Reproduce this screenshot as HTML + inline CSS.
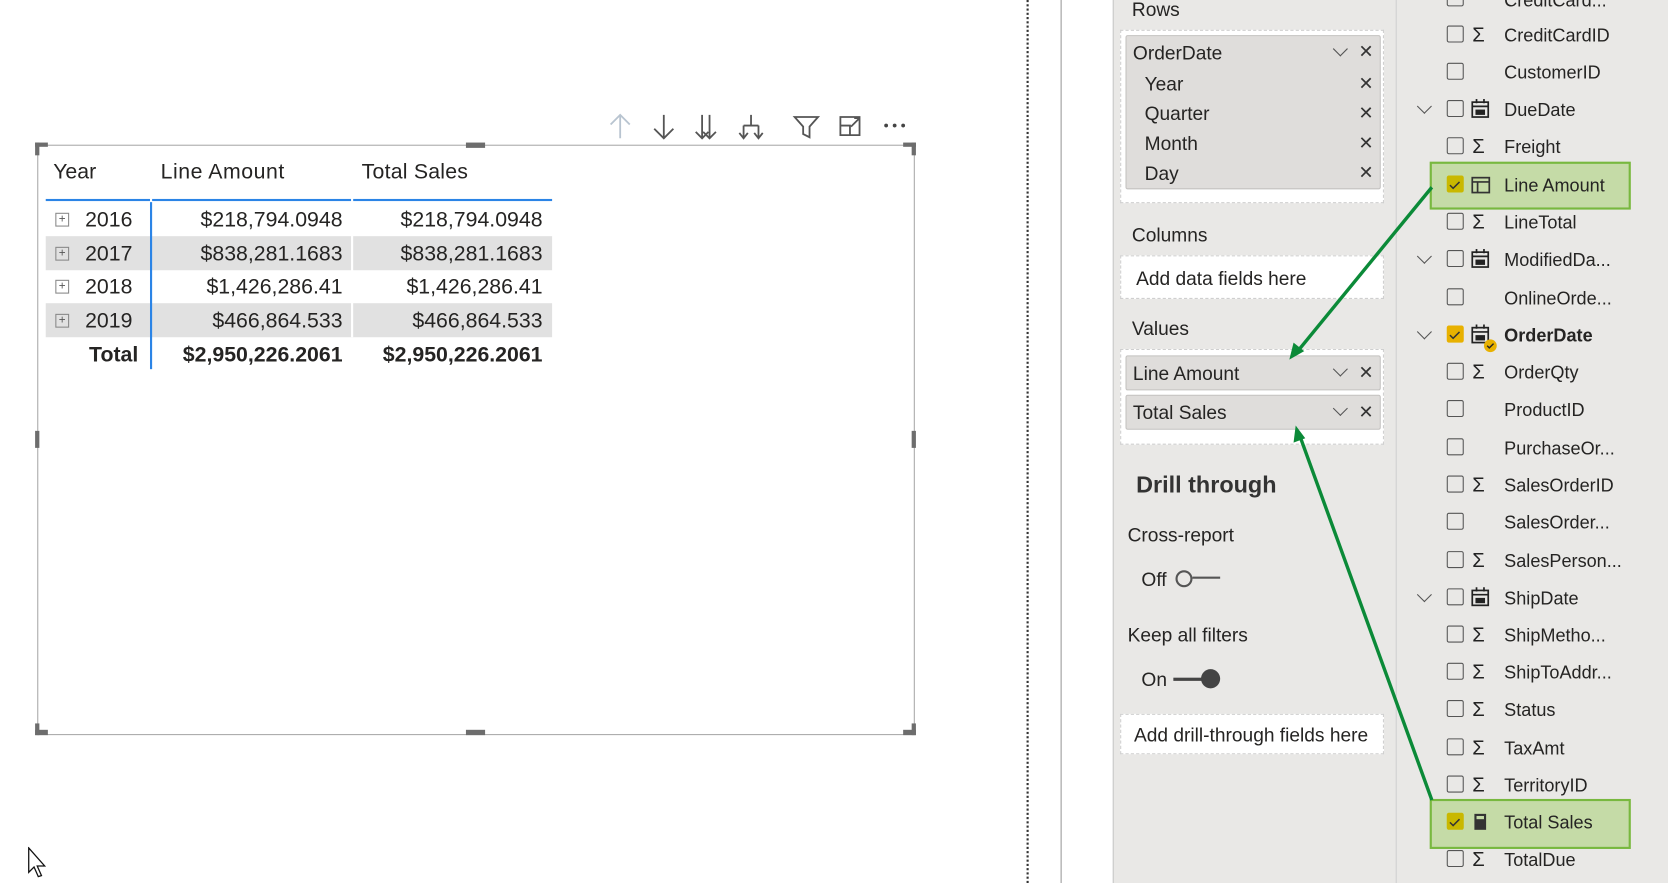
<!DOCTYPE html>
<html><head><meta charset="utf-8">
<style>
html,body{margin:0;padding:0;width:1668px;height:883px;overflow:hidden;background:#fff;}
#w{position:absolute;left:0;top:0;width:1568px;height:830px;transform-origin:0 0;transform:scale(1.06378,1.06386);font-family:"Liberation Sans",sans-serif;color:#252423;}
.a{position:absolute;white-space:nowrap;}
.t{font-size:20px;margin-top:2px;}
.num{position:absolute;text-align:right;font-size:20px;margin-top:2px;}
.p{font-size:18px;color:#252423;margin-top:1px;}
.cb{position:absolute;width:14px;height:14px;border:1.6px solid #555;border-radius:2px;background:transparent;}
.sg{position:absolute;font-size:19px;color:#222;margin-top:1px;}
.fl{position:absolute;font-size:17px;margin-top:1px;}
.chev{position:absolute;width:9px;height:9px;border-right:1.4px solid #555;border-bottom:1.4px solid #555;transform:rotate(45deg);}
.x{position:absolute;font-size:17px;color:#333;margin-top:1px;}
.h{position:absolute;background:#6d6d6d;}
</style></head><body><div id="w">
<div class="a" style="left:965px;top:0;width:0;height:830px;border-left:2.5px dotted #333;"></div>
<div class="a" style="left:997px;top:0;width:1px;height:830px;background:#9a9a9a;"></div>
<div class="a" style="left:1046px;top:0;width:266px;height:830px;background:#e9e8e6;border-left:1px solid #c8c8c8;"></div>
<div class="a" style="left:1312px;top:0;width:256px;height:830px;background:#e9e8e6;border-left:1px solid #d0d0d0;"></div>

<div class="a" style="left:35px;top:136px;width:823px;height:553px;border:1px solid #a9a9a9;"></div>
<div class="h" style="left:33px;top:134px;width:12px;height:4px"></div><div class="h" style="left:33px;top:134px;width:4px;height:12px"></div>
<div class="h" style="left:849px;top:134px;width:12px;height:4px"></div><div class="h" style="left:857px;top:134px;width:4px;height:12px"></div>
<div class="h" style="left:33px;top:686px;width:12px;height:5px"></div><div class="h" style="left:33px;top:680px;width:4px;height:11px"></div>
<div class="h" style="left:849px;top:686px;width:12px;height:5px"></div><div class="h" style="left:857px;top:680px;width:4px;height:11px"></div>
<div class="h" style="left:438px;top:134px;width:18px;height:5px"></div>
<div class="h" style="left:438px;top:686px;width:18px;height:5px"></div>
<div class="h" style="left:33px;top:405px;width:4px;height:16px"></div>
<div class="h" style="left:857px;top:405px;width:4px;height:16px"></div>

<svg class="a" style="left:565px;top:104px" width="290" height="30" viewBox="0 0 290 30" fill="none" stroke-width="1.7">
<g stroke="#b8c4d0"><path d="M18 4v22M9 13l9-9 9 9"/></g>
<g stroke="#555"><path d="M59 4v22M50 17l9 9 9-9"/>
<path d="M95 4v22M102 4v22M89 20l6 6 6-6M96 20l6 6 6-6"/>
<path d="M141 4v10M134 14h14M134 14v12M148 14v12M130 21l4 5 4-5M144 21l4 5 4-5"/>
<path d="M182 6h22l-8 9v10l-6-3v-7z"/>
<path d="M225 14h9v9h-9zM225 14v-8h18v17h-9M235 15l8-8M238 7h5v5"/></g>
<g fill="#444" stroke="none"><circle cx="268" cy="14" r="1.8"/><circle cx="276" cy="14" r="1.8"/><circle cx="284" cy="14" r="1.8"/></g>
</svg>

<div class="a t" style="left:50px;top:149px">Year</div>
<div class="a t" style="left:151px;top:149px;letter-spacing:0.5px">Line Amount</div>
<div class="a t" style="left:340px;top:149px;letter-spacing:0.2px">Total Sales</div>
<div class="a" style="left:43px;top:187px;width:98px;height:2px;background:#2b84e6"></div>
<div class="a" style="left:143px;top:187px;width:187px;height:2px;background:#2b84e6"></div>
<div class="a" style="left:332px;top:187px;width:187px;height:2px;background:#2b84e6"></div>
<div class="a" style="left:43px;top:222px;width:476px;height:32px;background:#e1e1e1"></div>
<div class="a" style="left:43px;top:285px;width:476px;height:32px;background:#e1e1e1"></div>
<div class="a" style="left:330px;top:190px;width:2px;height:127px;background:#fff"></div>
<div class="a" style="left:141px;top:190px;width:2px;height:157px;background:#2b84e6"></div>

<div class="a" style="left:52px;top:200px;width:11px;height:11px;border:1px solid #888;font-size:11px;line-height:11px;text-align:center;color:#555">+</div>
<div class="a" style="left:52px;top:232px;width:11px;height:11px;border:1px solid #888;font-size:11px;line-height:11px;text-align:center;color:#555">+</div>
<div class="a" style="left:52px;top:263px;width:11px;height:11px;border:1px solid #888;font-size:11px;line-height:11px;text-align:center;color:#555">+</div>
<div class="a" style="left:52px;top:295px;width:11px;height:11px;border:1px solid #888;font-size:11px;line-height:11px;text-align:center;color:#555">+</div>
<div class="a t" style="left:80px;top:194px">2016</div>
<div class="a t" style="left:80px;top:226px">2017</div>
<div class="a t" style="left:80px;top:257px">2018</div>
<div class="a t" style="left:80px;top:289px">2019</div>
<div class="num" style="left:150px;width:172px;top:194px">$218,794.0948</div>
<div class="num" style="left:150px;width:172px;top:226px">$838,281.1683</div>
<div class="num" style="left:150px;width:172px;top:257px">$1,426,286.41</div>
<div class="num" style="left:150px;width:172px;top:289px">$466,864.533</div>
<div class="num" style="left:340px;width:170px;top:194px">$218,794.0948</div>
<div class="num" style="left:340px;width:170px;top:226px">$838,281.1683</div>
<div class="num" style="left:340px;width:170px;top:257px">$1,426,286.41</div>
<div class="num" style="left:340px;width:170px;top:289px">$466,864.533</div>
<div class="num" style="left:50px;width:80px;top:321px;font-weight:bold">Total</div>
<div class="num" style="left:140px;width:182px;top:321px;font-weight:bold">$2,950,226.2061</div>
<div class="num" style="left:330px;width:180px;top:321px;font-weight:bold">$2,950,226.2061</div>

<svg class="a" style="left:26px;top:796px" width="20" height="30" viewBox="0 0 20 30"><path d="M1 1v23l5-5 4 9 3-1-4-9h7z" fill="#fff" stroke="#111" stroke-width="1.2"/></svg>

<div class="a p" style="left:1064px;top:-2px">Rows</div>
<div class="a" style="left:1053px;top:28px;width:246px;height:161px;border:1.5px dashed #cfcfcf;background:#fff"></div>
<div class="a" style="left:1058px;top:33px;width:238px;height:143px;background:#dfdddb;border:1px solid #c4c2c0;border-radius:2px"></div>
<div class="a p" style="left:1065px;top:39px">OrderDate</div>
<div class="chev" style="left:1255px;top:41px"></div><div class="x" style="left:1277px;top:38px">✕</div>
<div class="a p" style="left:1076px;top:68px">Year</div><div class="x" style="left:1277px;top:68px">✕</div>
<div class="a p" style="left:1076px;top:96px">Quarter</div><div class="x" style="left:1277px;top:96px">✕</div>
<div class="a p" style="left:1076px;top:124px">Month</div><div class="x" style="left:1277px;top:124px">✕</div>
<div class="a p" style="left:1076px;top:152px">Day</div><div class="x" style="left:1277px;top:152px">✕</div>

<div class="a p" style="left:1064px;top:210px">Columns</div>
<div class="a" style="left:1053px;top:240px;width:246px;height:39px;border:1.5px dashed #cfcfcf;background:#fff"></div>
<div class="a p" style="left:1068px;top:251px">Add data fields here</div>

<div class="a p" style="left:1064px;top:298px">Values</div>
<div class="a" style="left:1053px;top:328px;width:246px;height:88px;border:1.5px dashed #cfcfcf;background:#fff"></div>
<div class="a" style="left:1058px;top:334px;width:238px;height:31px;background:#dfdddb;border:1px solid #c4c2c0;border-radius:2px"></div>
<div class="a" style="left:1058px;top:371px;width:238px;height:31px;background:#dfdddb;border:1px solid #c4c2c0;border-radius:2px"></div>
<div class="a p" style="left:1065px;top:340px">Line Amount</div><div class="chev" style="left:1255px;top:342px"></div><div class="x" style="left:1277px;top:340px">✕</div>
<div class="a p" style="left:1065px;top:377px">Total Sales</div><div class="chev" style="left:1255px;top:379px"></div><div class="x" style="left:1277px;top:377px">✕</div>

<div class="a" style="left:1068px;top:443px;font-size:22px;font-weight:bold;color:#333">Drill through</div>
<div class="a p" style="left:1060px;top:492px">Cross-report</div>
<div class="a p" style="left:1073px;top:534px">Off</div>
<div class="a" style="left:1105px;top:536px;width:12px;height:12px;border:2px solid #555;border-radius:50%"></div>
<div class="a" style="left:1121px;top:542px;width:26px;height:2px;background:#555"></div>
<div class="a p" style="left:1060px;top:586px">Keep all filters</div>
<div class="a p" style="left:1073px;top:628px">On</div>
<div class="a" style="left:1103px;top:637px;width:28px;height:2.5px;background:#444"></div>
<div class="a" style="left:1129px;top:629px;width:18px;height:18px;background:#444;border-radius:50%"></div>
<div class="a" style="left:1053px;top:671px;width:246px;height:36px;border:1.5px dashed #cfcfcf;background:#fff"></div>
<div class="a p" style="left:1066px;top:680px">Add drill-through fields here</div>

<div class="a" style="left:1344px;top:152px;width:185px;height:41px;background:#c5dba7;border:2px solid #78b83f"></div>
<div class="a" style="left:1344px;top:751px;width:185px;height:43px;background:#c5dba7;border:2px solid #78b83f"></div>

<div class="cb" style="left:1360px;top:-10px"></div><div class="fl" style="left:1414px;top:-10px">CreditCard...</div>
<div class="cb" style="left:1360px;top:24px"></div><div class="sg" style="left:1384px;top:22px">Σ</div><div class="fl" style="left:1414px;top:23px">CreditCardID</div>
<div class="cb" style="left:1360px;top:59px"></div><div class="fl" style="left:1414px;top:58px">CustomerID</div>
<div class="chev" style="left:1334px;top:95px"></div><div class="cb" style="left:1360px;top:94px"></div><div class="fl" style="left:1414px;top:93px">DueDate</div>
<div class="cb" style="left:1360px;top:129px"></div><div class="sg" style="left:1384px;top:127px">Σ</div><div class="fl" style="left:1414px;top:128px">Freight</div>
<div class="cb" style="left:1360px;top:165px;background:#c9b800;border-color:#c9b800"></div><div class="fl" style="left:1414px;top:164px">Line Amount</div>
<div class="cb" style="left:1360px;top:200px"></div><div class="sg" style="left:1384px;top:198px">Σ</div><div class="fl" style="left:1414px;top:199px">LineTotal</div>
<div class="chev" style="left:1334px;top:236px"></div><div class="cb" style="left:1360px;top:235px"></div><div class="fl" style="left:1414px;top:234px">ModifiedDa...</div>
<div class="cb" style="left:1360px;top:271px"></div><div class="fl" style="left:1414px;top:270px">OnlineOrde...</div>
<div class="chev" style="left:1334px;top:307px"></div><div class="cb" style="left:1360px;top:306px;background:#e8b100;border-color:#e8b100"></div><div class="fl" style="left:1414px;top:305px;font-weight:bold">OrderDate</div>
<div class="cb" style="left:1360px;top:341px"></div><div class="sg" style="left:1384px;top:339px">Σ</div><div class="fl" style="left:1414px;top:340px">OrderQty</div>
<div class="cb" style="left:1360px;top:376px"></div><div class="fl" style="left:1414px;top:375px">ProductID</div>
<div class="cb" style="left:1360px;top:412px"></div><div class="fl" style="left:1414px;top:411px">PurchaseOr...</div>
<div class="cb" style="left:1360px;top:447px"></div><div class="sg" style="left:1384px;top:445px">Σ</div><div class="fl" style="left:1414px;top:446px">SalesOrderID</div>
<div class="cb" style="left:1360px;top:482px"></div><div class="fl" style="left:1414px;top:481px">SalesOrder...</div>
<div class="cb" style="left:1360px;top:518px"></div><div class="sg" style="left:1384px;top:516px">Σ</div><div class="fl" style="left:1414px;top:517px">SalesPerson...</div>
<div class="chev" style="left:1334px;top:554px"></div><div class="cb" style="left:1360px;top:553px"></div><div class="fl" style="left:1414px;top:552px">ShipDate</div>
<div class="cb" style="left:1360px;top:588px"></div><div class="sg" style="left:1384px;top:586px">Σ</div><div class="fl" style="left:1414px;top:587px">ShipMetho...</div>
<div class="cb" style="left:1360px;top:623px"></div><div class="sg" style="left:1384px;top:621px">Σ</div><div class="fl" style="left:1414px;top:622px">ShipToAddr...</div>
<div class="cb" style="left:1360px;top:658px"></div><div class="sg" style="left:1384px;top:656px">Σ</div><div class="fl" style="left:1414px;top:657px">Status</div>
<div class="cb" style="left:1360px;top:694px"></div><div class="sg" style="left:1384px;top:692px">Σ</div><div class="fl" style="left:1414px;top:693px">TaxAmt</div>
<div class="cb" style="left:1360px;top:729px"></div><div class="sg" style="left:1384px;top:727px">Σ</div><div class="fl" style="left:1414px;top:728px">TerritoryID</div>
<div class="cb" style="left:1360px;top:764px;background:#c9b800;border-color:#c9b800"></div><div class="fl" style="left:1414px;top:763px">Total Sales</div>
<div class="cb" style="left:1360px;top:799px"></div><div class="sg" style="left:1384px;top:797px">Σ</div><div class="fl" style="left:1414px;top:798px">TotalDue</div>

<svg class="a" style="left:0;top:0" width="1568" height="830" viewBox="0 0 1568 830" fill="none">
<g stroke="#333" stroke-width="1.4">
<path d="M1363 174l3 3 6-6M1363 315l3 3 6-6M1363 773l3 3 6-6"/>
</g>
<g stroke="#222" stroke-width="1.6">
<rect x="1384" y="96" width="15" height="14"/><path d="M1384 100h15M1388 93v4M1395 93v4"/>
<rect x="1384" y="237" width="15" height="14"/><path d="M1384 241h15M1388 234v4M1395 234v4"/>
<rect x="1384" y="308" width="15" height="14"/><path d="M1384 312h15M1388 305v4M1395 305v4"/>
<rect x="1384" y="555" width="15" height="14"/><path d="M1384 559h15M1388 552v4M1395 552v4"/>
</g>
<g fill="#222">
<rect x="1387" y="103" width="9" height="5"/><rect x="1387" y="244" width="9" height="5"/><rect x="1387" y="315" width="9" height="5"/><rect x="1387" y="562" width="9" height="5"/>
</g>
<circle cx="1401" cy="325" r="6" fill="#e8b100"/><path d="M1398 325l2 2 4-4" stroke="#222" stroke-width="1.3"/>
<rect x="1384" y="167" width="16" height="14" stroke="#333" stroke-width="1.6"/><path d="M1384 171h16M1389 171v10" stroke="#333" stroke-width="1.6"/>
<rect x="1386" y="765" width="11" height="15" fill="#333"/><rect x="1388" y="767" width="7" height="3" fill="#c5dba7"/>
<g stroke="#0b8a38" stroke-width="3.2">
<path d="M1346 176L1220 330"/>
<path d="M1346 752L1222 410"/>
</g>
<path d="M1212 338l4-16 10 8z" fill="#0b8a38"/>
<path d="M1218 400l-2 16 11-4z" fill="#0b8a38"/>
</svg>
</div></body></html>
